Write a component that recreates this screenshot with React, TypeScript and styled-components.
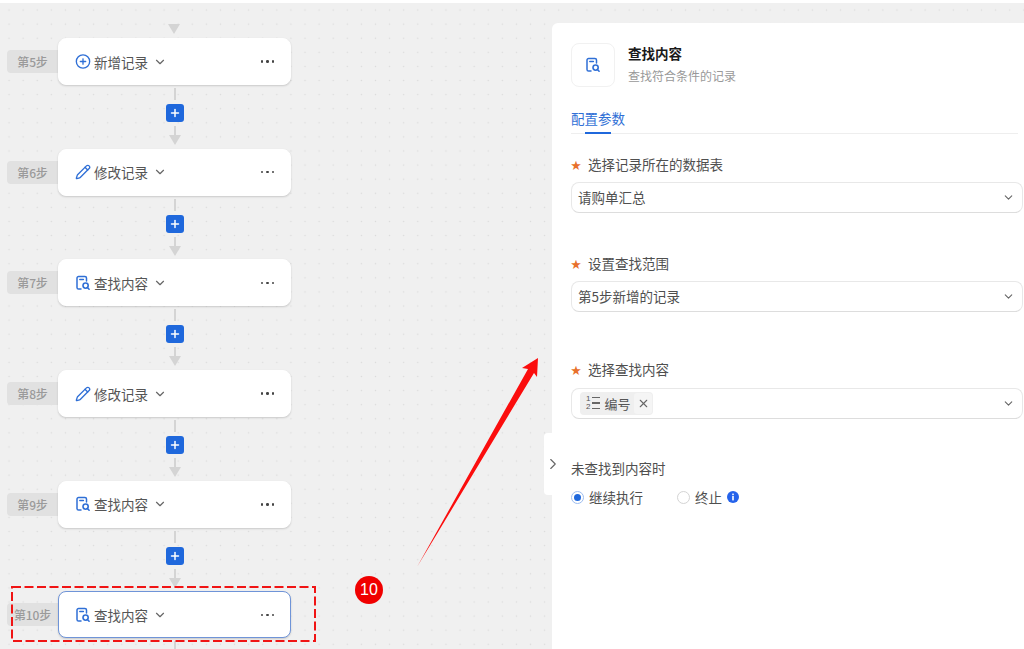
import * as React from "react";
import styled, { createGlobalStyle } from "styled-components";
import { ChevronDown, ChevronRight, CirclePlus, Pencil, Plus, X } from "lucide-react";

const Global = createGlobalStyle`
  html, body {
    background: #ffffff;
    margin: 0;
    padding: 0;
  }
  body {
    color: #333333;
    font-family: "Noto Sans CJK SC", "Noto Sans", sans-serif;
    font-size: 13.5px;
  }
`;

const Page = styled.div`
  height: 649px;
  overflow: hidden;
  padding-top: 3px;
  position: relative;
  box-sizing: border-box;
  width: 1024px;
`;

const Canvas = styled.div`
  background-color: #f0f0f0;
  background-image: radial-gradient(circle, #dadada 0.6px, transparent 1px);
  background-position: 2px 0px;
  background-size: 14.1px 14.1px;
  display: flex;
  height: 646px;
`;

const Flow = styled.div`
  box-sizing: border-box;
  display: flex;
  flex-direction: column;
  padding: 21px 0 0 7px;
  width: 545px;
`;

const TopArrow = styled.div`
  border-left: 6px solid transparent;
  border-right: 6px solid transparent;
  border-top: 10px solid #d4d4d4;
  flex-shrink: 0;
  height: 0;
  margin-bottom: 4px;
  margin-left: 161px;
  width: 0;
`;

const StepRow = styled.div`
  align-items: center;
  display: flex;
  flex-shrink: 0;
  height: 47px;
`;

const StepBadge = styled.div`
  align-items: center;
  background: #e1e1e1;
  border-radius: 4px 0 0 4px;
  color: #9a9a9a;
  display: flex;
  font-size: 12px;
  font-weight: 500;
  height: 23px;
  justify-content: center;
  letter-spacing: -0.2px;
  width: 51px;
`;

const StepCard = styled.div<{ $active?: boolean }>`
  align-items: center;
  background: #ffffff;
  border: 1px solid ${(p) => (p.$active ? "#6f94d8" : "#ffffff")};
  border-radius: 8px;
  box-shadow: 0 1px 2px rgba(0, 0, 0, 0.16);
  box-sizing: border-box;
  display: flex;
  height: 47px;
  padding: 0 16px;
  width: 233px;
`;

const StepIcon = styled.span`
  align-items: center;
  color: #2f6fd6;
  display: flex;
  height: 16px;
  justify-content: center;
  margin-right: 3px;
  width: 16px;
`;

const StepName = styled.span`
  color: #555555;
  font-size: 13.5px;
  line-height: 18px;
`;

const Caret = styled.span`
  color: #666666;
  display: flex;
  margin-left: 5px;
`;

const Dots = styled.span`
  display: flex;
  gap: 3px;
  margin-left: auto;

  i {
    background: #444444;
    border-radius: 50%;
    display: block;
    height: 2.5px;
    width: 2.5px;
  }
`;

const Connector = styled.div`
  align-items: center;
  box-sizing: border-box;
  display: flex;
  flex-direction: column;
  flex-shrink: 0;
  height: 63.7px;
  margin-left: 51px;
  padding-top: 3px;
  width: 233px;
`;

const ConnectorLine = styled.div<{ $h: number }>`
  background: #d4d4d4;
  flex-shrink: 0;
  height: ${(p) => p.$h}px;
  width: 2px;
`;

const AddButton = styled.div`
  align-items: center;
  background: #1f68dc;
  border-radius: 3px;
  color: #ffffff;
  display: flex;
  flex-shrink: 0;
  height: 18px;
  justify-content: center;
  margin: 4px 0;
  width: 18px;
`;

const ArrowHead = styled.div`
  border-left: 6px solid transparent;
  border-right: 6px solid transparent;
  border-top: 10px solid #d4d4d4;
  height: 0;
  width: 0;
`;

const Panel = styled.div`
  background: #ffffff;
  border-top-left-radius: 6px;
  box-sizing: border-box;
  display: flex;
  flex-direction: column;
  margin-top: 20px;
  margin-left: 7px;
  padding: 20px 1px 0 19px;
  position: relative;
  width: 472px;
`;

const Handle = styled.div`
  align-items: center;
  background: #ffffff;
  border-radius: 4px 0 0 4px;
  color: #666666;
  display: flex;
  height: 62px;
  justify-content: center;
  left: -8px;
  position: absolute;
  top: 410px;
  width: 18px;
`;

const PanelHead = styled.div`
  display: flex;
  gap: 13px;
`;

const HeadIcon = styled.div`
  align-items: center;
  border: 1px solid #f1f1f1;
  border-radius: 8px;
  box-sizing: border-box;
  color: #2f6fd6;
  display: flex;
  height: 44px;
  justify-content: center;
  width: 44px;
`;

const HeadText = styled.div`
  display: flex;
  flex-direction: column;
  gap: 4px;
`;

const HeadTitle = styled.div`
  color: #1a1a1a;
  font-size: 13.5px;
  font-weight: 700;
  line-height: 20px;
`;

const HeadSub = styled.div`
  color: #999999;
  font-size: 12px;
  line-height: 18px;
`;

const Tabs = styled.div`
  border-bottom: 1px solid #eeeeee;
  display: flex;
  margin: 21px 5px 20px 0;
  padding-bottom: 5px;
  position: relative;
`;

const Tab = styled.div`
  color: #2f6fd6;
  font-size: 13.5px;
  line-height: 20px;
  position: relative;

  &::after {
    background: #1f68dc;
    bottom: -6px;
    content: "";
    height: 2px;
    left: 14px;
    position: absolute;
    right: 14px;
  }
`;

const Field = styled.div<{ $mb: number }>`
  margin-bottom: ${(p) => p.$mb}px;
`;

const Label = styled.div<{ $gap?: number }>`
  align-items: center;
  color: #4f4f4f;
  display: flex;
  font-size: 13.5px;
  height: 20px;
  margin-bottom: ${(p) => p.$gap ?? 7.5}px;
`;

const Star = styled.span`
  color: #e8702a;
  display: flex;
  font-size: 10.5px;
  justify-content: center;
  padding-right: 7px;
  width: 10px;
`;

const Select = styled.div`
  align-items: center;
  border: 1px solid #e8e8e8;
  border-bottom-color: #dddddd;
  border-radius: 8px;
  box-sizing: border-box;
  color: #4f4f4f;
  display: flex;
  font-size: 13.5px;
  height: 31px;
  justify-content: space-between;
  padding: 0 7px 0 6px;
`;

const SelectCaret = styled.span`
  color: #666666;
  display: flex;
`;

const Tag = styled.span`
  align-items: center;
  background: #efefef;
  border-radius: 4px;
  color: #555555;
  display: flex;
  font-size: 13px;
  gap: 4px;
  height: 23px;
  margin-left: 2px;
  padding: 0 1px 0 6px;
`;

const OrderIcon = styled.span`
  align-items: center;
  color: #555555;
  display: flex;
  font-family: "Liberation Sans", sans-serif;
  font-size: 8px;
  gap: 1.5px;
  line-height: 8px;
`;

const OrderNums = styled.span`
  display: flex;
  flex-direction: column;
`;

const OrderLines = styled.span`
  display: flex;
  flex-direction: column;
  gap: 4px;

  i {
    background: #666666;
    display: block;
    height: 1.5px;
    width: 8.5px;
  }
`;

const TagClose = styled.span`
  align-items: center;
  background: #f5f5f5;
  border-radius: 3px;
  color: #666666;
  display: flex;
  height: 21px;
  justify-content: center;
  width: 18px;
`;

const PlainLabel = styled.div`
  color: #4f4f4f;
  font-size: 13.5px;
  line-height: 20px;
  margin-bottom: 9px;
`;

const RadioRow = styled.div`
  align-items: center;
  display: flex;
`;

const RadioItem = styled.label<{ $mr?: number }>`
  align-items: center;
  color: #4f4f4f;
  display: flex;
  font-size: 13.5px;
  gap: 5px;
  margin-right: ${(p) => p.$mr ?? 0}px;
`;

const RadioDot = styled.span<{ $on?: boolean }>`
  background: #ffffff;
  border: 1px solid ${(p) => (p.$on ? "#9dbdf0" : "#d4d4d4")};
  border-radius: 50%;
  box-sizing: border-box;
  display: block;
  height: 13px;
  position: relative;
  width: 13px;

  &::after {
    background: #1f68dc;
    border-radius: 50%;
    content: "";
    display: ${(p) => (p.$on ? "block" : "none")};
    height: 7px;
    left: 2px;
    position: absolute;
    top: 2px;
    width: 7px;
  }
`;

const InfoBadge = styled.span`
  display: flex;
  margin-left: 5px;
`;

const DashedSvg = styled.svg`
  left: 11px;
  position: absolute;
  top: 586px;
`;

const NumberBadge = styled.div`
  align-items: center;
  background: #f00000;
  border-radius: 50%;
  color: #ffffff;
  display: flex;
  font-family: "Liberation Sans", sans-serif;
  font-size: 16px;
  height: 28px;
  justify-content: center;
  left: 355px;
  position: absolute;
  top: 576px;
  width: 28px;
`;

const ArrowSvg = styled.svg`
  left: 410px;
  position: absolute;
  top: 350px;
`;

const FindIcon = ({ size = 16 }: { size?: number }) => (
  <svg width={size} height={size} viewBox="0 0 16 16" fill="none" stroke="currentColor" strokeWidth="1.5" strokeLinecap="round">
    <path d="M6 14H3.6A1.6 1.6 0 0 1 2 12.4V3.1A1.6 1.6 0 0 1 3.6 1.5h6.3a1.6 1.6 0 0 1 1.6 1.6V6" />
    <path d="M4.8 4.6h3.6" />
    <circle cx="10.6" cy="10.6" r="2.6" strokeWidth="1.6" />
    <path d="M12.6 12.7l1.5 1.5" strokeWidth="1.6" />
  </svg>
);

const InfoIcon = () => (
  <svg width="12" height="12" viewBox="0 0 12 12">
    <circle cx="6" cy="6" r="6" fill="#2563eb" />
    <rect x="5.2" y="5" width="1.6" height="4.4" fill="#ffffff" />
    <rect x="5.2" y="2.6" width="1.6" height="1.6" fill="#ffffff" />
  </svg>
);

type StepKind = "add" | "edit" | "find";

const steps: { no: number; kind: StepKind; name: string }[] = [
  { no: 5, kind: "add", name: "新增记录" },
  { no: 6, kind: "edit", name: "修改记录" },
  { no: 7, kind: "find", name: "查找内容" },
  { no: 8, kind: "edit", name: "修改记录" },
  { no: 9, kind: "find", name: "查找内容" },
  { no: 10, kind: "find", name: "查找内容" },
];

const kindIcon = (kind: StepKind) => {
  if (kind === "add") return <CirclePlus size={17} strokeWidth={2} />;
  if (kind === "edit") return <Pencil size={16} strokeWidth={2} />;
  return <FindIcon />;
};

const App = () => {
  return (
    <Page>
      <Global />
      <Canvas>
        <Flow>
          <TopArrow />
          {steps.map((step, i) => (
            <React.Fragment key={step.no}>
              <StepRow>
                <StepBadge>第{step.no}步</StepBadge>
                <StepCard $active={step.no === 10}>
                  <StepIcon>{kindIcon(step.kind)}</StepIcon>
                  <StepName>{step.name}</StepName>
                  <Caret>
                    <ChevronDown size={14} />
                  </Caret>
                  <Dots>
                    <i />
                    <i />
                    <i />
                  </Dots>
                </StepCard>
              </StepRow>
              {i < steps.length - 1 ? (
                <Connector>
                  <ConnectorLine $h={12} />
                  <AddButton>
                    <Plus size={12} strokeWidth={3} />
                  </AddButton>
                  <ConnectorLine $h={9} />
                  <ArrowHead />
                </Connector>
              ) : (
                <Connector>
                  <ConnectorLine $h={12} />
                </Connector>
              )}
            </React.Fragment>
          ))}
        </Flow>
        <Panel>
          <Handle>
            <ChevronRight size={22} strokeWidth={1.5} />
          </Handle>
          <PanelHead>
            <HeadIcon>
              <FindIcon />
            </HeadIcon>
            <HeadText>
              <HeadTitle>查找内容</HeadTitle>
              <HeadSub>查找符合条件的记录</HeadSub>
            </HeadText>
          </PanelHead>
          <Tabs>
            <Tab>配置参数</Tab>
          </Tabs>
          <Field $mb={40.5}>
            <Label>
              <Star>★</Star>选择记录所在的数据表
            </Label>
            <Select>
              请购单汇总
              <SelectCaret>
                <ChevronDown size={13} />
              </SelectCaret>
            </Select>
          </Field>
          <Field $mb={47.5}>
            <Label>
              <Star>★</Star>设置查找范围
            </Label>
            <Select>
              第5步新增的记录
              <SelectCaret>
                <ChevronDown size={13} />
              </SelectCaret>
            </Select>
          </Field>
          <Field $mb={39.5}>
            <Label $gap={8.5}>
              <Star>★</Star>选择查找内容
            </Label>
            <Select>
              <Tag>
                <OrderIcon>
                  <OrderNums>
                    <span>1</span>
                    <span>2</span>
                  </OrderNums>
                  <OrderLines>
                    <i />
                    <i />
                    <i />
                  </OrderLines>
                </OrderIcon>
                编号
                <TagClose>
                  <X size={13} />
                </TagClose>
              </Tag>
              <SelectCaret>
                <ChevronDown size={13} />
              </SelectCaret>
            </Select>
          </Field>
          <PlainLabel>未查找到内容时</PlainLabel>
          <RadioRow>
            <RadioItem $mr={34}>
              <RadioDot $on />
              继续执行
            </RadioItem>
            <RadioItem>
              <RadioDot />
              终止
            </RadioItem>
            <InfoBadge>
              <InfoIcon />
            </InfoBadge>
          </RadioRow>
        </Panel>
      </Canvas>
      <DashedSvg width="305" height="56" viewBox="0 0 305 56">
        <rect x="1" y="1" width="303" height="54" fill="none" stroke="#f01414" strokeWidth="2" strokeDasharray="9 3.5" />
      </DashedSvg>
      <NumberBadge>10</NumberBadge>
      <ArrowSvg width="140" height="225" viewBox="410 350 140 225">
        <polygon points="417,567 528,369 522,368 538,358 537,377 534,373" fill="#fb0d0d" />
      </ArrowSvg>
    </Page>
  );
};

export default App;
